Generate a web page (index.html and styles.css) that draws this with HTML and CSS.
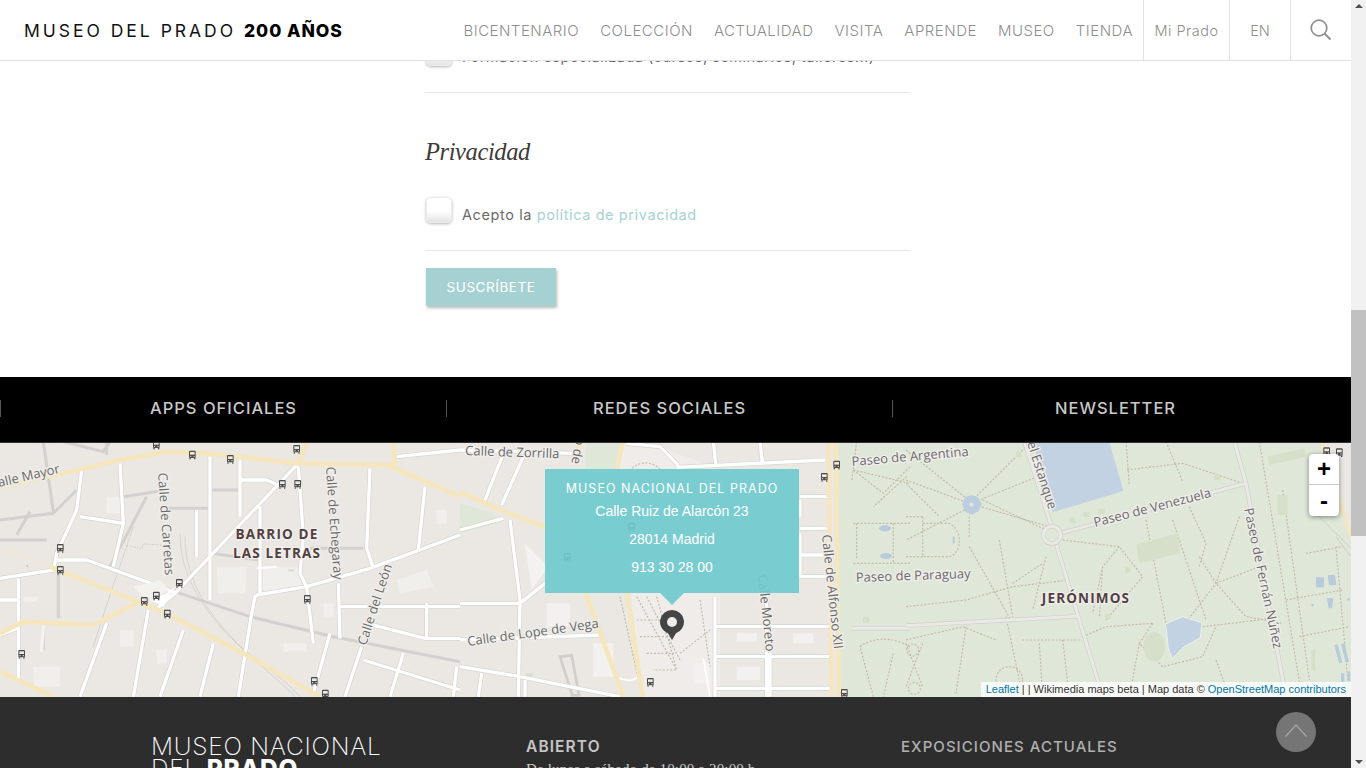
FILE: index.html
```html
<!DOCTYPE html>
<html lang="es">
<head>
<meta charset="utf-8">
<title>Museo del Prado</title>
<link rel="stylesheet" href="styles.css">
</head>
<body>
<div class="window">
  <div class="page">
    <header class="topbar">
      <a class="brand">MUSEO DEL PRADO <b>200 AÑOS</b></a>
      <nav class="nav">
        <a>BICENTENARIO</a><a>COLECCIÓN</a><a>ACTUALIDAD</a><a>VISITA</a><a>APRENDE</a><a>MUSEO</a><a>TIENDA</a>
      </nav>
      <a class="cell cell-prado">Mi Prado</a>
      <a class="cell cell-lang">EN</a>
      <a class="cell cell-search">
        <svg width="22" height="22" viewBox="0 0 22 22" fill="none" stroke="#8f8f8f" stroke-width="1.7"><circle cx="9" cy="9" r="7.8"/><path d="M14.5 14.5l6 6" stroke-width="2"/></svg>
      </a>
    </header>

    <main class="form">
      <div class="check-row first">
        <span class="box"></span>
        <span class="check-text">Formación especializada (cursos, seminarios, talleres...)</span>
      </div>
      <h2 class="section-title">Privacidad</h2>
      <div class="check-row second">
        <span class="box"></span>
        <span class="check-text">Acepto la <a class="link">política de privacidad</a></span>
      </div>
      <button class="submit">SUSCRÍBETE</button>
    </main>

    <section class="band">
      <a class="band-item">APPS OFICIALES</a>
      <a class="band-item">REDES SOCIALES</a>
      <a class="band-item">NEWSLETTER</a>
    </section>

    <section class="map">
      <svg class="map-art" width="1351" height="254" viewBox="0 443 1351 254" xmlns="http://www.w3.org/2000/svg">
        <defs>
          <g id="bus">
            <rect x="-10" y="-13" width="20" height="22" rx="3" fill="#4b4b4b"/>
            <rect x="-7" y="-9" width="14" height="8" fill="#eceae6"/>
            <circle cx="-5" cy="4" r="2" fill="#eceae6"/><circle cx="5" cy="4" r="2" fill="#eceae6"/>
            <rect x="-9" y="9" width="4" height="4" fill="#4b4b4b"/><rect x="5" y="9" width="4" height="4" fill="#4b4b4b"/>
          </g>
          <g id="west-roads" fill="none" stroke-linejoin="round">
            <path d="M245 90l-15 120-60 130-10 50M360 70l10 180-30 130M370 250l-130-20"/>
            <path d="M170 360h90l220 80 50 20M630 50v430M720 60v170M720 120h80l45 20M590 210v140"/>
            <path d="M895 70l-370 390-60 50M895 80l15 210-10 110 20 40 20 170"/>
            <path d="M780 200v260l-15 10-10 50-40 250M770 465l150-25 190-55 270-100"/>
            <path d="M1110 85l-10 240 20 60M1275 140l-20 190M1015 430l5 165M1020 500h360M1100 550l175 45h105M1280 490v100"/>
            <path d="M990 580l-50 180M1085 620l-50 150M1090 660l290 90M1210 640l-40 130M1370 680l-10 90M1190 50l190-20"/>
            <path d="M0 415l160-25M55 415v310M0 480h50M0 585l50-20"/>
            <path d="M320 550l-80 220M445 510l-45 260M550 570l-70 200M640 610l-40 160"/>
          </g>
          <g id="centre-roads" fill="none" stroke-linejoin="round">
            <path d="M0 30l340 10M130 40L75 180M190 50l-65 145M0 270l130-35"/>
            <path d="M150 240l30 240-5 290M0 490h180l75-60M0 600l420-15M0 680l180 30 300 60M65 700l-10 70M195 720v50"/>
            <path d="M650 82l445-22M760 5l8 75M900 5l8 70M500 10l100 10 50 50 10 20"/>
            <path d="M765 560h350M768 650h345M920 470v300M765 470v300M930 640v130M768 745h345"/>
            <path d="M1020 170h80M1020 180v50M1020 265h80M1020 345h80M1020 410h80M1020 280v130"/>
          </g>
          <g id="park-roads" fill="none">
            <path d="M985 5l35 125 120 640M355 5l80 250M450 310l140 460M470 278l548-148M0 557l512-28"/>
          </g>
        </defs>
        <rect x="0" y="443" width="1351" height="254" fill="#ebe8e4"/>

        <!-- park -->
        <path d="M838 443H1322L1351 540V697H840Z" fill="#dfe7d8"/>
        <path d="M1322 443H1351V540Z" fill="#ebe8e4"/>
        <path d="M618 443H650L720 470V697H640Z" fill="#efecea"/>

        <!-- west blocks -->
        <g transform="translate(0,440) scale(.33333)">
          <g fill="#f1efec">
            <path d="M650 380h90l-5 80h-80z"/><path d="M780 380h110l30 70H780z"/><path d="M320 170h40v50h-40z"/>
            <path d="M100 680h80v60h-80z"/><path d="M360 570h40v50h-40z"/><path d="M1190 420l90-30 20 50-100 20z"/>
            <path d="M1310 210h30v40h-30z"/><path d="M970 490h30v40h-30z"/><path d="M850 610h70v25h-70z"/>
            <path d="M70 470h40v15H70z"/><path d="M470 630h30v40h-30z"/>
          </g>
          <g fill="none" stroke="#d2d1cf" stroke-width="9">
            <path d="M0 240l160-20 70-70M130 5l30 210M190 5l120 30 20-30M0 300h140M90 215l-40 70M320 45v-40"/>
            <path d="M370 170l130-20M505 205h120M635 150h80M635 340l140 20M1090 325H930"/>
            <path d="M480 440l270 90 250 60 380 75"/>
            <path d="M175 400v135M130 560v70M440 170l-110 210"/>
          </g>
          <g fill="none" stroke="#c9c8c6" stroke-width="2">
            <path d="M540 280c0 120 60 210 130 290s170 130 230 200M555 290c0 110 50 200 120 280s140 130 210 200"/>
            <path d="M400 260c-30 90-70 200-120 360"/>
          </g>
          <path d="M380 316l45 10 5-14 85 5" stroke="#b8b6b2" stroke-width="2" stroke-dasharray="4 4" fill="none"/>
          <use href="#west-roads" stroke="#d6d4d0" stroke-width="14"/>
          <use href="#west-roads" stroke="#fff" stroke-width="10"/>
          <path d="M130 560l-5 70" fill="none" stroke-linecap="round" stroke="#f5f4f2" stroke-width="10"/>
          <path d="M770 385l60-5" stroke="#fff" stroke-width="6" fill="none"/>
          <path d="M450 480l50-20 25-20-35 60z" fill="#fff"/>
          <path d="M400 440l80-20 30 30-70 30z" fill="#f3f2ef"/>
          <path d="M865 388h18v6h-18z" fill="#d4e0c8"/>
          <g fill="none" stroke="#f5e6bd" stroke-width="14" stroke-linejoin="round">
            <path d="M0 140l190-40 160-38 150-27 120 5 140 15 130 15 270 5 220 95"/>
            <path d="M895 70l25-65M1170 75l15-8-5-62" />
            <path d="M150 380l150 60 200 80 230 120 230 130"/>
            <path d="M0 580l70-35 210 10 130-65"/>
            <path d="M0 695l160 75"/>
          </g>
          <path d="M20 328l130 52" fill="none" stroke="#f5e6bd" stroke-width="4" stroke-dasharray="8 3"/>
          <circle cx="82" cy="378" r="3" fill="#b4c8da"/>
        </g>

        <!-- centre blocks -->
        <g transform="translate(460,440) scale(.33333)">
          <path d="M0 190l100 30 20 30-120 30z" fill="#dfe7d8"/>
          <path d="M380 5h110l-30 130 20 200-120-20z" fill="#dfe7d8"/>
          <path d="M195 310l70 70-50 70z" fill="#f4f2f0"/>
          <g fill="#f3f1ef"><path d="M260 490h70v70h-70z"/><path d="M400 610h60v100h-60z"/><path d="M700 670h50v60h-50z"/><path d="M830 580h60v25h-60z"/><path d="M1000 580h60v30h-60z"/><path d="M830 680h70v40h-70z"/></g>
          <path d="M198 700h20v10h-20z" fill="#d4e0c8"/>
          <path d="M300 650l35-4 22 120h-20z" fill="none" stroke="#cfcecb" stroke-width="8"/>
          <use href="#centre-roads" stroke="#d6d4d0" stroke-width="14"/>
          <use href="#centre-roads" stroke="#fff" stroke-width="10"/>
          <path d="M730 655l20 115M478 715c30 10 50 10 65-20" fill="none" stroke="#fff" stroke-width="5"/>
          <g fill="none" stroke="#c4b8a8" stroke-width="3.5" stroke-dasharray="6 5">
            <path d="M530 470l120 220H580M560 470l100 190M590 470l60 220M530 540h100M540 590h100M560 640h85M500 100c50-60 120-30 130 60M660 640l90-70M720 480l30 200M480 470l60 270"/>
            <path d="M1180 90l170 40M1180 90l90 70 80-80M1190 5l-15 120M1180 250h170M1180 370h170M1190 250v110M1340 110l-100 90M1200 620c40-30 100-30 150 0M1240 770l-40-150M1300 640l-30 130M1300 250v120"/>
          </g>
          <g fill="none" stroke="#f5e6bd" stroke-width="14">
            <path d="M488 5l-25 125 35 310 50 330"/>
            <path d="M365 5l-20 60M0 155l110 50 180 70 70 10"/>
            <path d="M370 440l120 330"/>
          </g>
          <g fill="none" stroke="#f5e6bd" stroke-width="13">
            <path d="M1105 5l10 765M1127 5l10 765"/>
          </g>
          <path d="M1175 565h175" stroke="#cfcfca" stroke-width="13" fill="none"/>
          <path d="M1175 565h175" stroke="#e9e9e6" stroke-width="9" fill="none"/>
          <ellipse cx="1275" cy="265" rx="18" ry="9" fill="#b7cbdc"/>
          <ellipse cx="1278" cy="348" rx="18" ry="9" fill="#b7cbdc"/>
          <rect x="1208" y="530" width="20" height="18" fill="#d6dfca"/>
        </g>

        <!-- east park -->
        <g transform="translate(906,440) scale(.33333)">
          <path d="M380 5h230l42 148-212 64z" fill="#c3d2e2"/>
          <g fill="none" stroke="#c4b8a8" stroke-width="3.5" stroke-dasharray="6 5">
            <path d="M0 120l190 70 240 70M0 30l200 160M190 190L350 30M195 190l200-80M195 200L0 300M230 180l190 90M190 230l0 60M50 250h80c40 20 40 90 0 100H50M50 230v120M0 230h50M0 350h50"/>
            <path d="M190 320l130 230M280 300l40 230M0 500l180-20 140-40 170-20M320 430l90-60M420 350l-40 160"/>
            <path d="M470 300l170 20 70 90-110 130M640 320l-50 60-30 140M660 5l10 130M780 5l50 120M720 240l60 310M800 240l100 300M880 350l50 80 90 100 110 20M1000 230l-70 200-100 130M930 430l130-50M850 200l50 110-20 70M590 380l-10 150"/>
            <path d="M0 600l170-40 100 40M180 560l-30 200M300 530l50 240M350 600h170M400 610l10 160M470 600l20 170M530 590l70-30 140-10M740 550l-40 60 70 70 120-30 40-90M890 560l170-20 60-10M930 660l40 110M700 610l-30 160"/>
            <path d="M1060 5l120 720M1130 150l80 570M1200 340l110-20M1140 480l170-30M1180 590l150-30M1290 320l40 450M1010 130l-180-60-170 20"/>
            <circle cx="20" cy="630" r="18"/><circle cx="310" cy="720" r="40"/><circle cx="25" cy="745" r="18"/>
            <path d="M0 610l50 130M50 610L0 740"/>
            <path d="M0 130l100 100"/>
          </g>
          <g fill="#d6dfca">
            <path d="M690 315l125-35 8 60-122 30z"/><path d="M1115 165h30v60h-30z"/><path d="M1085 50l110-25 5 25-110 25z"/>
            <rect x="490" y="232" width="18" height="16"/><rect x="532" y="215" width="18" height="16"/><rect x="578" y="206" width="18" height="16"/>
            <rect x="925" y="103" width="18" height="18"/><rect x="330" y="35" width="18" height="16"/>
            <rect x="657" y="382" width="16" height="16"/><rect x="598" y="522" width="16" height="16"/><rect x="1216" y="630" width="12" height="60"/>
            <ellipse cx="745" cy="620" rx="32" ry="45"/>
          </g>
          <path d="M778 552l52-22 58 18-5 45-50 28-34 36-12-30-5-50z" fill="#c3d2e2" stroke="#eef0ea" stroke-width="3"/>
          <path d="M196 166l18 4 14 22-10 22-22 10-20-10-8-22 10-22z" fill="#bccde0"/>
          <circle cx="196" cy="194" r="6" fill="#dfe7d8"/>
          <path d="M140 290h6v20h-6z" fill="#b7cbdc"/>
          <g fill="#b7cbdc">
            <path d="M1230 412h24v30h-24z"/><path d="M1265 405h22l4 30h-22z"/><circle cx="1220" cy="495" r="4"/><path d="M1262 475h20l-4 30h-10z"/><circle cx="1328" cy="478" r="4"/>
            <path d="M1285 615l10-2 14 55-10 2zM1305 612l10-2 14 55-10 2zM1305 700h10v25h-10zM1325 695h8v28h-8z"/>
          </g>
          <use href="#park-roads" stroke="#cfcfca" stroke-width="13"/>
          <use href="#park-roads" stroke="#e9e9e6" stroke-width="9"/>
          <circle cx="438" cy="285" r="26" fill="#dfe7d8" stroke="#cfcfca" stroke-width="13"/>
          <circle cx="438" cy="285" r="26" fill="none" stroke="#e9e9e6" stroke-width="9"/>
          <path d="M1245 5l90 285" fill="none" stroke="#f5e6bd" stroke-width="10"/>
          <path d="M1210 200l125 125M1290 290l45 60" fill="none" stroke="#cfcfca" stroke-width="3"/>
        </g>

        <!-- bus stops -->
        <g transform="translate(0,440) scale(.33333)">
          <use href="#bus" x="469" y="15"/><use href="#bus" x="577" y="45"/><use href="#bus" x="691" y="58"/><use href="#bus" x="890" y="28"/><use href="#bus" x="847" y="133"/><use href="#bus" x="893" y="133"/><use href="#bus" x="181" y="325"/><use href="#bus" x="181" y="391"/><use href="#bus" x="538" y="430"/><use href="#bus" x="469" y="468"/><use href="#bus" x="433" y="484"/><use href="#bus" x="502" y="522"/><use href="#bus" x="922" y="478"/><use href="#bus" x="65" y="643"/><use href="#bus" x="943" y="724"/><use href="#bus" x="976" y="762"/>
        </g>
        <g transform="translate(460,440) scale(.33333)">
          <use href="#bus" x="1130" y="75"/><use href="#bus" x="1093" y="112"/><use href="#bus" x="514" y="262"/><use href="#bus" x="322" y="352"/><use href="#bus" x="571" y="727"/><use href="#bus" x="1153" y="760"/>
        </g>
        <g transform="translate(906,440) scale(.33333)">
          <use href="#bus" x="1262" y="35"/><use href="#bus" x="1300" y="38"/>
        </g>

        <!-- labels -->
        <g class="road-label">
          <text transform="translate(-1,487) rotate(-13)">alle Mayor</text>
          <text transform="translate(158,473) rotate(86)">Calle de Carretas</text>
          <text transform="translate(326,467) rotate(86)">Calle de Echegaray</text>
          <text transform="translate(366,646) rotate(-72)">Calle del León</text>
          <text transform="translate(465,455) rotate(2)">Calle de Zorrilla</text>
          <text transform="translate(581,409) rotate(100)">Paseo de</text>
          <text transform="translate(468,646) rotate(-8)">Calle de Lope de Vega</text>
          <text transform="translate(758,575) rotate(84)">Calle Moreto</text>
          <text transform="translate(822,535) rotate(84)">Calle de Alfonso XII</text>
          <text transform="translate(852,466) rotate(-5)">Paseo de Argentina</text>
          <text transform="translate(856,582) rotate(-2)">Paseo de Paraguay</text>
          <text transform="translate(1095,527) rotate(-14.5)">Paseo de Venezuela</text>
          <text transform="translate(1244,509) rotate(78)">Paseo de Fernán Núñez</text>
          <text transform="translate(1027,443) rotate(72)">el Estanque</text>
        </g>
        <g class="area-label">
          <text x="277" y="539">BARRIO DE</text>
          <text x="277" y="558">LAS LETRAS</text>
          <text x="1086" y="603">JERÓNIMOS</text>
        </g>
      </svg>

      <div class="popup">
        <h3 class="popup-title">MUSEO NACIONAL DEL PRADO</h3>
        <p class="popup-line">Calle Ruiz de Alarcón 23</p>
        <p class="popup-line">28014 Madrid</p>
        <p class="popup-line">913 30 28 00</p>
      </div>
      <svg class="pin" width="24" height="30" viewBox="0 0 24 30"><path fill-rule="evenodd" fill="#444" d="M12 0a12 12 0 0 1 4 23.3L12 30l-4-6.7A12 12 0 0 1 12 0zm0 7a5 5 0 1 0 0 10 5 5 0 0 0 0-10z"/></svg>

      <div class="zoom-ctl"><a class="zoom-btn">+</a><a class="zoom-btn">-</a></div>
      <div class="attrib"><a>Leaflet</a> | | Wikimedia maps beta | Map data © <a>OpenStreetMap contributors</a></div>
    </section>

    <footer class="footer">
      <div class="foot-col">
        <div class="foot-logo">MUSEO NACIONAL<br>DEL <b>PRADO</b></div>
      </div>
      <div class="foot-col">
        <h4 class="foot-head">ABIERTO</h4>
        <p class="foot-text">De lunes a sábado de 10:00 a 20:00 h</p>
      </div>
      <div class="foot-col">
        <h4 class="foot-head wide">EXPOSICIONES ACTUALES</h4>
      </div>
    </footer>

    <a class="to-top">
      <svg width="22" height="13" viewBox="0 0 22 13" fill="none" stroke="#a5a5a5" stroke-width="1.2"><path d="M.5 12.5L11 1l10.500 11.500"/></svg>
    </a>
  </div>

  <div class="scrollbar">
    <span class="arrow-up"></span>
    <span class="thumb"></span>
    <span class="arrow-down"></span>
  </div>
</div>
</body>
</html>
```

FILE: styles.css
```css
* { box-sizing: border-box; }
html, body { margin: 0; height: 100%; overflow: hidden; background: #fff; }
body { font-family: Inter, "Liberation Sans", sans-serif; }
a { text-decoration: none; color: inherit; }

.window { display: flex; width: 1366px; height: 768px; overflow: hidden; }
.page { position: relative; width: 1351px; height: 768px; overflow: hidden; flex: none; }

/* header */
.topbar {
  position: absolute; top: 0; left: 0; right: 0; z-index: 5;
  height: 61px; background: #fff; border-bottom: 1px solid #e2e2e2;
  display: flex; align-items: stretch;
}
.brand {
  margin-left: 24px; align-self: center; font-size: 17.5px; font-weight: 400;
  letter-spacing: 2.98px; color: #111; white-space: nowrap; flex: none;
}
.brand b { font-weight: 800; letter-spacing: .95px; color: #000; }
.nav {
  margin-left: auto; display: flex; align-items: center; gap: 21px; padding-right: 10px;
  font-size: 15px; font-weight: 300; color: #8e8e8e; letter-spacing: .5px; white-space: nowrap;
}
.cell {
  display: flex; align-items: center; justify-content: center;
  border-left: 1px solid #e2e2e2; font-size: 14.5px; font-weight: 300; color: #8e8e8e; white-space: nowrap;
}
.cell-prado { width: 86px; letter-spacing: .5px; }
.cell-lang { width: 61px; }
.cell-search { width: 61px; }

/* form */
.form { width: 485px; margin-left: 425px; padding-top: 40px; height: 377px; color: #666; }
.check-row { display: flex; align-items: flex-start; gap: 10px; border-bottom: 1px solid #e7e7e7; }
.check-row.first { height: 53px; }
.check-row.second { height: 54px; }
.box {
  width: 26px; height: 26px; margin-left: 1px; flex: none; border-radius: 5px; border: 1px solid #ececec;
  background: linear-gradient(#fff 55%, #e4e4e4);
  box-shadow: 0 1px 3px rgba(0,0,0,.3);
}
.check-text { font-size: 14.5px; line-height: 18px; padding-top: 9px; letter-spacing: .6px; white-space: nowrap; color: #6a6a6a; }
.first .check-text { padding-top: 8px; letter-spacing: .5px; }
.link { color: #a6d2d3; }
.section-title {
  margin: 0; height: 104px; padding-top: 44px;
  font: italic 400 24.5px/30px "Liberation Serif", serif; letter-spacing: -.4px; color: #3f3a38;
}
.submit {
  display: block; margin: 17px 0 0 1px; width: 130px; height: 38px; border: 0; padding: 0;
  background: #a6d1d2; color: #fff; font: 400 13.5px Inter, sans-serif; letter-spacing: .55px;
  box-shadow: 1px 2px 3px rgba(0,0,0,.28);
}

/* band */
.band { height: 66px; background: #000; border-bottom: 1px solid #333; display: grid; grid-template-columns: repeat(3, 446px); align-items: center; padding-bottom: 2px; }
.band-item {
  height: 17px; border-left: 1px solid #555; color: #c9c9c9; font-size: 16.5px; font-weight: 500;
  line-height: 17px; text-align: center; letter-spacing: 1px;
}

/* map */
.map { position: relative; height: 254px; overflow: hidden; background: #ebe8e4; }
.map-art { display: block; }
.road-label text { font: 400 13px "Open Sans", sans-serif; fill: #6a6a6a; stroke: #f1efec; stroke-width: 2.5px; paint-order: stroke; }
.area-label text { font: 700 13.5px "Open Sans", sans-serif; fill: #523f42; stroke: #f1efec; stroke-width: 2.5px; paint-order: stroke; letter-spacing: 1.15px; text-anchor: middle; }

.popup {
  position: absolute; left: 545px; top: 26px; width: 254px; height: 124px;
  background: rgba(112, 202, 207, .93); color: #fff; text-align: center; padding-top: 12px;
}
.popup::after {
  content: ""; position: absolute; left: 115px; top: 124px;
  border: 12.5px solid transparent; border-bottom: 0; border-top-color: rgba(112, 202, 207, .93);
}
.popup-title { margin: 0; font-size: 12.5px; font-weight: 400; line-height: 16px; letter-spacing: 1.03px; }
.popup-line { margin: 0; font: 14px/28px "Liberation Sans", sans-serif; }
.pin { position: absolute; left: 660px; top: 167px; }

.zoom-ctl {
  position: absolute; left: 1309px; top: 11px; width: 30px; height: 62px; background: #fff;
  border-radius: 4px; box-shadow: 0 1px 5px rgba(0,0,0,.45); display: grid; grid-template-rows: 31px 31px;
}
.zoom-btn {
  display: flex; align-items: center; justify-content: center;
  font: 700 24px/1 "Liberation Sans", sans-serif; color: #000;
}
.zoom-btn:first-child { border-bottom: 1px solid #ccc; }
.attrib {
  position: absolute; right: 0; bottom: 0; height: 15px; padding: 0 5px;
  background: rgba(255,255,255,.8); font: 11px/15px "Liberation Sans", sans-serif; color: #333; white-space: nowrap;
}
.attrib a { color: #0078a8; }

/* footer */
.footer {
  height: 71px; background: #2d2d2d; display: grid; grid-template-columns: repeat(3, 375px);
  padding-left: 151px; overflow: hidden;
}
.foot-col { min-width: 0; }
.foot-logo { margin-top: 38px; font-size: 24.5px; line-height: 22px; font-weight: 200; color: #fff; letter-spacing: .75px; white-space: nowrap; }
.foot-logo b { font-weight: 800; }
.foot-head { margin: 41px 0 0; font-size: 15.5px; line-height: 18px; font-weight: 600; color: #c6c6c6; letter-spacing: 1.1px; }
.foot-head.wide { font-size: 15px; font-weight: 500; letter-spacing: 1.05px; color: #b0b0b0; }
.foot-text { margin: 4px 0 0; font: 15px/18px "Liberation Serif", serif; letter-spacing: .15px; color: #c9c9c9; white-space: nowrap; }

.to-top {
  position: absolute; left: 1276px; top: 712px; width: 40px; height: 40px; border-radius: 50%;
  background: #757575; display: flex; align-items: center; justify-content: center; padding-bottom: 4px;
}

/* scrollbar */
.scrollbar { position: relative; width: 15px; height: 768px; background: #f1f1f1; flex: none; }
.thumb { position: absolute; left: 0; top: 310px; width: 15px; height: 226px; background: #c1c1c1; }
.arrow-up, .arrow-down { position: absolute; left: 3.5px; border: 4px solid transparent; }
.arrow-up { top: 4px; border-bottom-color: #505050; border-top: 0; }
.arrow-down { bottom: 4px; border-top-color: #505050; border-bottom: 0; }
```
